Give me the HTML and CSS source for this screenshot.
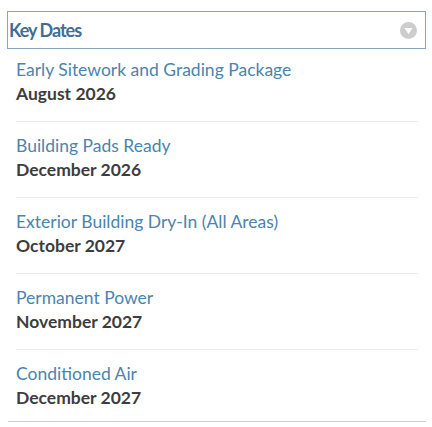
FILE: index.html
```html
<!DOCTYPE html>
<html lang="en">
<head>
    <meta charset="utf-8">
    <title>Key Dates</title>
    <link rel="stylesheet" href="styles.css">
</head>
<body>

    <div class="panel">

        <div class="panel-head">
            <span class="panel-title">Key Dates</span>
            <span class="toggle">
                <svg width="17" height="17" viewBox="0 0 16 16">
                    <circle cx="8" cy="8" r="8" fill="#cdcdcd"/>
                    <path d="M4.2 5.6 L11.8 5.6 L8 11.6 Z" fill="#fff"/>
                </svg>
            </span>
        </div>

        <ul class="dates">
            <li>
                <div class="milestone">Early Sitework and Grading Package</div>
                <div class="when">August 2026</div>
            </li>
            <li>
                <div class="milestone">Building Pads Ready</div>
                <div class="when">December 2026</div>
            </li>
            <li>
                <div class="milestone">Exterior Building Dry-In (All Areas)</div>
                <div class="when">October 2027</div>
            </li>
            <li>
                <div class="milestone">Permanent Power</div>
                <div class="when">November 2027</div>
            </li>
            <li>
                <div class="milestone">Conditioned Air</div>
                <div class="when">December 2027</div>
            </li>
        </ul>

    </div>

</body>
</html>
```

FILE: styles.css
```css
html, body {
    margin: 0;
    background: #fff;
    font-family: Lato, "Open Sans", sans-serif;
}
.panel {
    padding: 11px 6px 0 7px;
}
.panel-head {
    display: flex;
    align-items: center;
    justify-content: space-between;
    height: 36px;
    padding: 0 8px 0 1px;
    border: 1px solid #86a4bb;
}
.panel-title {
    font-size: 18px;
    font-weight: 700;
    letter-spacing: -1px;
    color: #3f6e94;
}
.toggle {
    display: flex;
}
/* list of dates */
.dates {
    list-style: none;
    margin: 0 0 0 1px;
    padding: 0 8px;
    border-bottom: 1px solid #cfcfcf;
}
.dates li {
    padding: 12px 0 15px;
    border-bottom: 1px solid #ececec;
    font-size: 17.5px;
    line-height: 24px;
}
.dates li:first-child {
    padding-top: 9px;
}
.dates li:last-child {
    padding-bottom: 11px;
    border-bottom: none;
}
.milestone {
    color: #4b84ad;
}
.when {
    font-weight: 700;
    color: #3d3d3d;
}
```
